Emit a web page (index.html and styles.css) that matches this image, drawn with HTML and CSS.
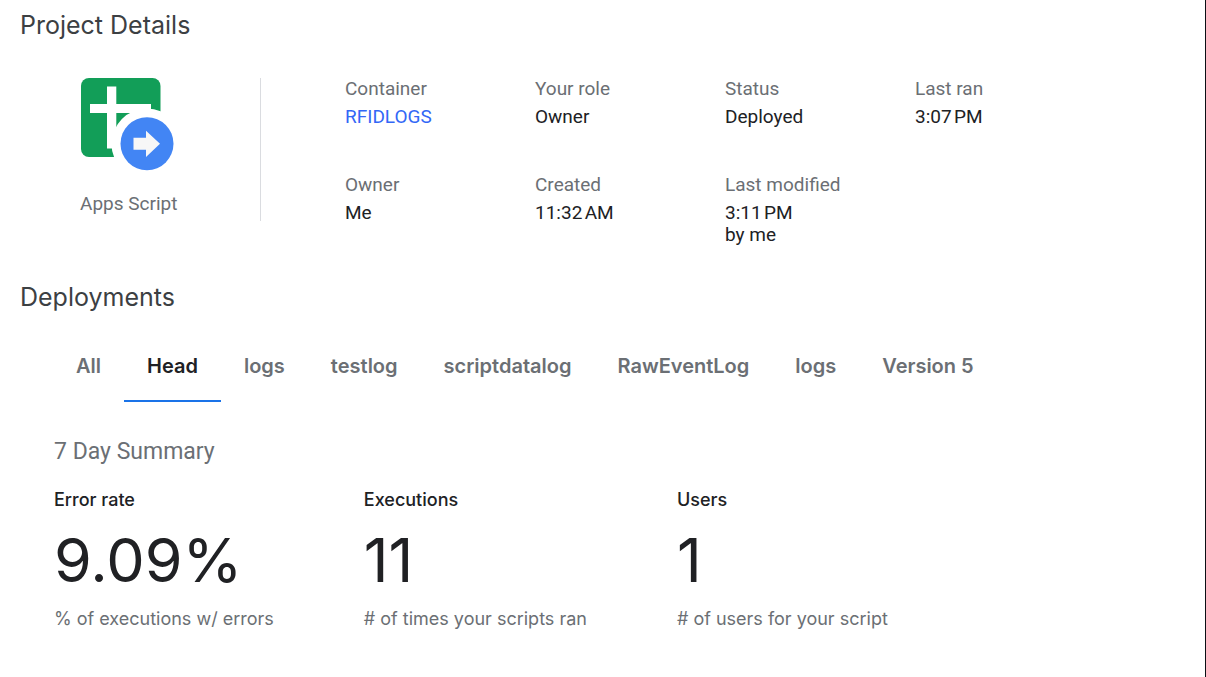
FILE: index.html
```html
<!DOCTYPE html>
<html lang="en">
<head>
<meta charset="utf-8">
<title>Project Details</title>
<link rel="stylesheet" href="styles.css">
</head>
<body>
<main class="page">
  <section>
    <h1 class="heading">Project Details</h1>
    <div class="project">
      <div class="project-type">
        <svg class="project-icon" viewBox="0 0 94 93" width="94" height="93" aria-hidden="true">
          <rect x="1" y="0" width="79.500" height="79" rx="8" fill="#129e58"/>
          <path d="M27 8.500h9.300V26H71v9H36.300v35.500H27V35H10v-9h17z" fill="#fff"/>
          <circle cx="67" cy="66" r="35.500" fill="#fff"/>
          <circle cx="67" cy="65.700" r="26.500" fill="#4285f4"/>
          <path d="M53.500 59.700H66v-7L80 65.700l-14 13.300v-7.300H53.500z" fill="#f7f7f7"/>
        </svg>
        <span>Apps Script</span>
      </div>
      <dl class="details">
        <div><dt>Container</dt><dd><a class="link" href="#">RFIDLOGS</a></dd></div>
        <div><dt>Your role</dt><dd>Owner</dd></div>
        <div><dt>Status</dt><dd>Deployed</dd></div>
        <div><dt>Last ran</dt><dd>3:07&#8239;PM</dd></div>
        <div><dt>Owner</dt><dd>Me</dd></div>
        <div><dt>Created</dt><dd>11:32&#8239;AM</dd></div>
        <div><dt>Last modified</dt><dd>3:11&#8239;PM<br>by me</dd></div>
      </dl>
    </div>
  </section>
  <section class="deployments">
    <h2 class="heading">Deployments</h2>
    <div class="tabs" role="tablist">
      <button class="tab" role="tab">All</button>
      <button class="tab tab-active" role="tab" aria-selected="true">Head</button>
      <button class="tab" role="tab">logs</button>
      <button class="tab" role="tab">testlog</button>
      <button class="tab" role="tab">scriptdatalog</button>
      <button class="tab" role="tab">RawEventLog</button>
      <button class="tab" role="tab">logs</button>
      <button class="tab" role="tab">Version 5</button>
    </div>
    <div class="summary">
      <h3 class="summary-title">7 Day Summary</h3>
      <div class="stats">
        <div class="stat">
          <h4 class="stat-name">Error rate</h4>
          <p class="stat-value">9.09%</p>
          <p class="stat-note">% of executions w/ errors</p>
        </div>
        <div class="stat">
          <h4 class="stat-name">Executions</h4>
          <p class="stat-value">11</p>
          <p class="stat-note"># of times your scripts ran</p>
        </div>
        <div class="stat">
          <h4 class="stat-name">Users</h4>
          <p class="stat-value">1</p>
          <p class="stat-note"># of users for your script</p>
        </div>
      </div>
    </div>
  </section>
</main>
</body>
</html>
```
FILE: styles.css
```css
* { box-sizing: border-box; }
body, h1, h2, h3, h4, p, dl, dd { margin: 0; }
body {
  background: #fff;
  color: #202124;
  font-family: Roboto, sans-serif;
  font-size: 19px;
  line-height: 22px;
}
.page {
  min-height: 100vh;
  padding: 8px 20px;
  border-right: 1px solid #0b0f14;
}
.heading {
  color: #3c4043;
  font-family: Inter, sans-serif;
  font-size: 25px;
  font-weight: 400;
  line-height: 34px;
}
.project {
  display: flex;
  align-items: flex-start;
  margin-top: 36px;
}
.project-type {
  display: flex;
  flex-direction: column;
  gap: 22px;
  width: 241px;
  height: 143px;
  padding-left: 60px;
  border-right: 1px solid #dadce0;
  color: #6b6f74;
}
.project-icon { display: block; }
.details {
  flex: 1;
  display: grid;
  grid-template-columns: repeat(auto-fill, 190px);
  row-gap: 24px;
  padding-left: 84px;
}
.details dt { margin-bottom: 6px; color: #6b6f74; }
.details > div { min-height: 72px; }
.link { color: #3367f6; text-decoration: none; }
.deployments { margin-top: 34px; }
.tabs {
  display: flex;
  flex-wrap: wrap;
  margin-top: 16px;
  padding-left: 33px;
}
.tab {
  height: 72px;
  padding: 2px 23px 0;
  border: 0;
  border-bottom: 2px solid transparent;
  background: none;
  color: #6b6f74;
  font-family: Inter, sans-serif;
  font-size: 20px;
  font-weight: 600;
}
.tab-active { border-bottom-color: #1a73e8; color: #202124; }
.summary { padding: 36px 34px 0; }
.summary-title {
  color: #6b6f74;
  font-size: 23px;
  font-weight: 400;
  line-height: 28px;
}
.stats {
  display: flex;
  flex-wrap: wrap;
  gap: 90px;
  margin-top: 23px;
}
.stat {
  font-family: Inter, sans-serif;
  font-size: 18px;
}
.stat-name { font-size: 18px; font-weight: 500; }
.stat-value { margin-top: 13px; font-size: 61px; line-height: 72px; }
.stat-note { margin-top: 12px; color: #6b6f74; }
```
